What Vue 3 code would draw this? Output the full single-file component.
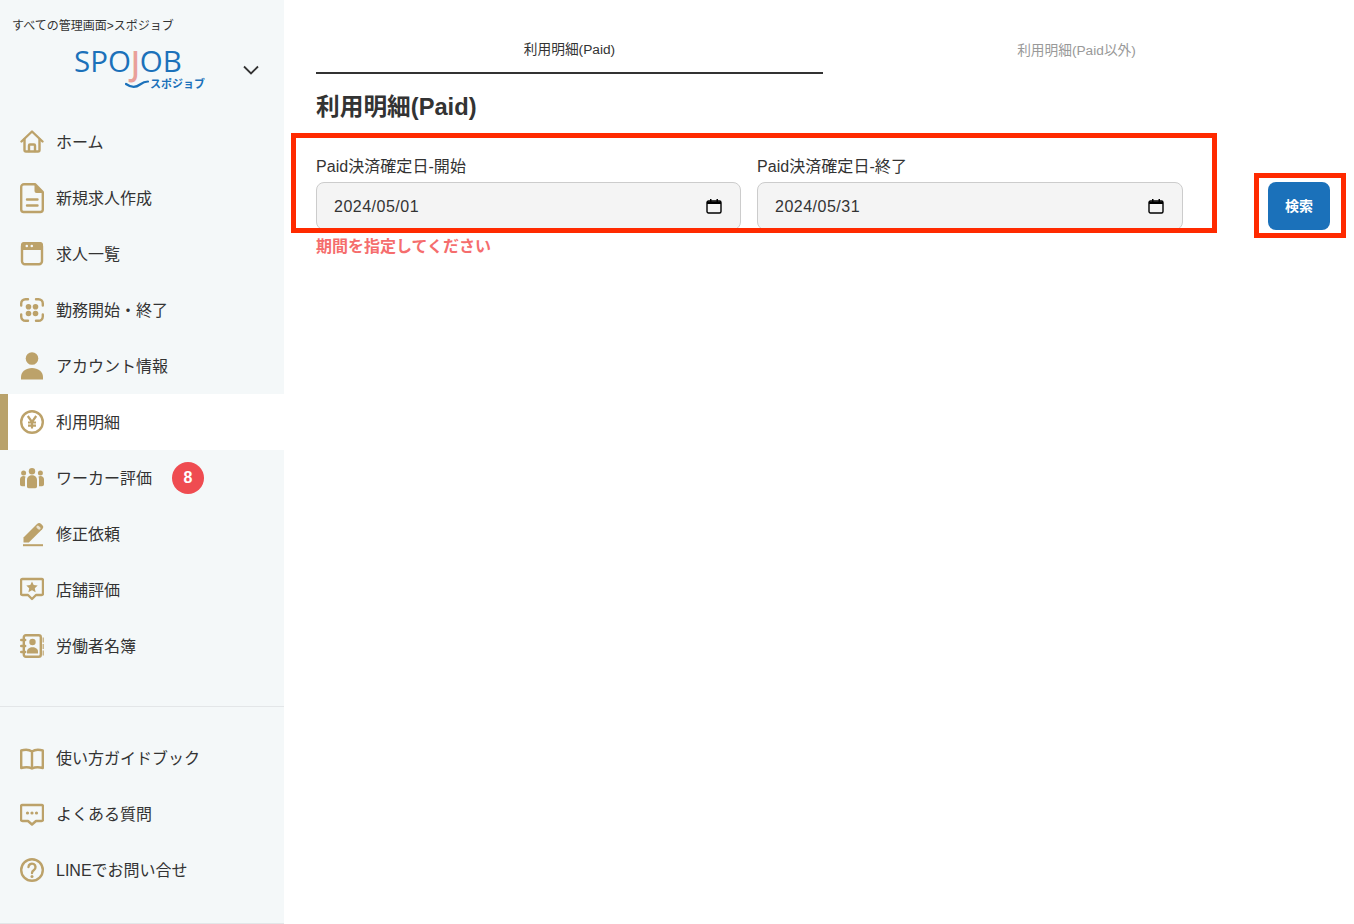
<script setup>
const bg = '#f4f8f9'
const s = 'fill="none" stroke="currentColor" stroke-width="2.400" stroke-linecap="round" stroke-linejoin="round"'
const icons = {
  home: `<g ${s}><path d="M1.500 15.500 12 5.500l10.500 10"/><path d="M4.500 13.500V24A1.500 1.500 0 0 0 6 25.500h12a1.500 1.500 0 0 0 1.500-1.500V13.500"/><path d="M9 25v-5.500a1 1 0 0 1 1-1h4a1 1 0 0 1 1 1V25"/></g>`,
  doc: `<path ${s} d="M4 2.200h11l7.800 8V27.500a2.500 2.500 0 0 1-2.500 2.500H3.700a2.500 2.500 0 0 1-2.500-2.500V5A2.800 2.800 0 0 1 4 2.200Z"/><path fill="currentColor" d="M14.500 2.500 23 11h-6.500a2 2 0 0 1-2-2Z"/><g ${s}><path d="M7 17.500h10.500M7 23.500h10.500"/></g>`,
  win: `<rect ${s} x="2" y="5.200" width="20" height="21" rx="3"/><path fill="currentColor" d="M4 4h16a3 3 0 0 1 3 3v5H1V7a3 3 0 0 1 3-3Z"/><circle cx="6.800" cy="8" r="1.300" fill="${bg}"/><circle cx="11.800" cy="8" r="1.300" fill="${bg}"/>`,
  scan: `<g ${s}><path d="M8 5.200H5.500a4.300 4.300 0 0 0-4.300 4.300v2M16 5.200h2.500a4.300 4.300 0 0 1 4.300 4.300v2M8 26.800H5.500a4.300 4.300 0 0 1-4.300-4.300v-2M16 26.800h2.500a4.300 4.300 0 0 0 4.300-4.300v-2"/></g><g fill="currentColor"><circle cx="8.500" cy="12.700" r="2.800"/><circle cx="15.500" cy="12.700" r="2.800"/><circle cx="8.500" cy="19.500" r="2.800"/><circle cx="15.500" cy="19.500" r="2.800"/></g>`,
  person: `<g fill="currentColor"><circle cx="12" cy="8.500" r="6.300"/><path d="M1 29.500V27c0-5.500 5-9 11-9s11 3.500 11 9v2.500Z"/></g>`,
  yen: `<circle ${s} cx="12" cy="16" r="10.800"/><g fill="none" stroke="currentColor" stroke-width="2.200"><path d="m7.800 10 4.200 6 4.200-6M12 16v6.500M8 16.500h8M8 19.700h8"/></g>`,
  team: `<g fill="currentColor"><circle cx="12" cy="9.200" r="3.200"/><circle cx="3.600" cy="11" r="2.500"/><circle cx="20.400" cy="11" r="2.500"/><path d="M7 18c0-3 2.200-4.800 5-4.800s5 1.800 5 4.800v6.500c0 1-.7 1.700-1.700 1.700H8.700c-1 0-1.700-.7-1.700-1.700Z"/><path d="M0 17.500c0-2 1.500-3.500 3.500-3.500.8 0 1.500.2 2 .6C5.100 15.700 5 17 5 18v6.200H2c-1.200 0-2-.8-2-2Z"/><path d="M24 17.500c0-2-1.500-3.500-3.500-3.500-.8 0-1.500.2-2 .6.400 1.100.5 2.400.5 3.400v6.200h3c1.200 0 2-.8 2-2Z"/></g>`,
  pen: `<path fill="currentColor" d="M3.500 24v-4.500L17 6a3 3 0 0 1 4.200 0l1 1a3 3 0 0 1 0 4.200L8.800 24.500H4a.5.5 0 0 1-.5-.5Z"/><rect x="16.200" y="8.200" width="4.600" height="2.800" rx="1.300" transform="rotate(45 18.500 9.600)" fill="#e9e2d0"/><rect x="3" y="26.200" width="20" height="2" fill="currentColor"/>`,
  starb: `<path ${s} d="M2.500 5h19A1.500 1.500 0 0 1 23 6.500v13a1.500 1.500 0 0 1-1.500 1.500H16l-4 4-4-4H2.500A1.500 1.500 0 0 1 1 19.500v-13A1.500 1.500 0 0 1 2.500 5Z"/><path fill="currentColor" d="m12 7.500 1.700 3.600 4 .5-2.900 2.700.8 3.900-3.600-2-3.600 2 .8-3.900-2.900-2.700 4-.5Z"/>`,
  contact: `<rect ${s} x="3.800" y="5.200" width="17" height="21.600" rx="2"/><g ${s}><path d="M1.200 10h4M1.200 16h4M1.200 22h4"/></g><path fill="currentColor" d="M22.500 7.500H24v5h-1.500ZM22.500 14H24v5h-1.500ZM22.500 20.500H24v5h-1.500Z" opacity=".75"/><g fill="currentColor"><circle cx="12.500" cy="12" r="3.200"/><path d="M7 23.500v-2c0-2.600 2.500-4.200 5.500-4.200s5.500 1.600 5.500 4.200v2Z"/></g>`,
  book: `<path ${s} d="M1.200 8.500c4-1.200 8-1 10.800 1 2.800-2 6.800-2.200 10.800-1V26c-4-1-7.800-1-10.800.5C9 25 5.200 25 1.200 26ZM12 9.500v17"/>`,
  chat: `<path ${s} d="M2.500 7h19A1.500 1.500 0 0 1 23 8.500v13a1.500 1.500 0 0 1-1.500 1.500H16l-4 3.500L8 23H2.500A1.500 1.500 0 0 1 1 21.500v-13A1.500 1.500 0 0 1 2.500 7Z"/><g fill="currentColor"><circle cx="7.500" cy="15" r="1.600"/><circle cx="12" cy="15" r="1.600"/><circle cx="16.500" cy="15" r="1.600"/></g>`,
  help: `<circle ${s} cx="12" cy="16" r="10.800"/><path ${s} d="M8.500 13a3.500 3.500 0 1 1 5.500 3c-1.300.9-2 1.500-2 3"/><circle cx="12" cy="22.500" r="1.500" fill="currentColor"/>`
}
const mainNav = [
  { label: 'ホーム', icon: 'home' },
  { label: '新規求人作成', icon: 'doc' },
  { label: '求人一覧', icon: 'win' },
  { label: '勤務開始・終了', icon: 'scan' },
  { label: 'アカウント情報', icon: 'person' },
  { label: '利用明細', icon: 'yen', active: true },
  { label: 'ワーカー評価', icon: 'team', badge: 8 },
  { label: '修正依頼', icon: 'pen' },
  { label: '店舗評価', icon: 'starb' },
  { label: '労働者名簿', icon: 'contact' }
]
const subNav = [
  { label: '使い方ガイドブック', icon: 'book' },
  { label: 'よくある質問', icon: 'chat' },
  { label: 'LINEでお問い合せ', icon: 'help' }
]
const fields = [
  { label: 'Paid決済確定日-開始', value: '2024/05/01' },
  { label: 'Paid決済確定日-終了', value: '2024/05/31' }
]
</script>

<template>
  <div class="page">
    <aside class="sidebar">
      <div class="crumb">すべての管理画面&gt;スポジョブ</div>
      <div class="brand">
        <div class="logo">
          <div class="logo-word">SPO<span class="logo-j">J</span>OB</div>
          <div class="logo-sub">
            <svg class="swoosh" width="24" height="10" viewBox="0 0 24 10"><path d="M1 5c5 3.500 10 3.500 14 .5 2-1.500 4-3 8-3" fill="none" stroke="#1b71ba" stroke-width="2.200" stroke-linecap="round"/></svg>
            <span>スポジョブ</span>
          </div>
        </div>
        <svg class="chevron" width="18" height="12" viewBox="0 0 18 12"><path d="M2 2.500 9 9.500l7-7" fill="none" stroke="#333" stroke-width="1.800"/></svg>
      </div>
      <nav class="nav">
        <a v-for="item in mainNav" :key="item.label" class="nav-item" :class="{ active: item.active }">
          <svg class="icon" width="24" height="32" viewBox="0 0 24 32" v-html="icons[item.icon]"></svg>
          <span class="nav-label">{{ item.label }}</span>
          <span v-if="item.badge" class="badge">{{ item.badge }}</span>
        </a>
      </nav>
      <nav class="nav nav-sub">
        <a v-for="item in subNav" :key="item.label" class="nav-item">
          <svg class="icon" width="24" height="32" viewBox="0 0 24 32" v-html="icons[item.icon]"></svg>
          <span class="nav-label">{{ item.label }}</span>
        </a>
      </nav>
    </aside>

    <main class="main">
      <div class="tabs">
        <div class="tab current">利用明細(Paid)</div>
        <div class="tab">利用明細(Paid以外)</div>
      </div>
      <h1 class="title">利用明細(Paid)</h1>
      <div class="search">
        <div class="fields">
          <label v-for="f in fields" :key="f.label" class="field">
            <span class="field-label">{{ f.label }}</span>
            <span class="date">
              <span class="date-value">{{ f.value }}</span>
              <svg width="16" height="16" viewBox="0 0 16 16"><path d="M2.500 3h11A1.500 1.500 0 0 1 15 4.500v9a1.500 1.500 0 0 1-1.500 1.500h-11A1.500 1.500 0 0 1 1 13.500v-9A1.500 1.500 0 0 1 2.500 3Z" fill="none" stroke="#000" stroke-width="1.400"/><path d="M1 3.500h14V6H1ZM4 1h1.500v2.500H4ZM10.500 1H12v2.500h-1.500Z" fill="#000"/></svg>
            </span>
          </label>
        </div>
        <button class="btn" type="button"><span class="btn-label">検索</span></button>
      </div>
      <p class="error">期間を指定してください</p>
    </main>

    <div class="mark mark-form"></div>
    <div class="mark mark-btn"></div>
  </div>
</template>

<style>
html, body { margin: 0; padding: 0; background: #fff; }
</style>

<style scoped>
.page {
  position: relative;
  display: flex;
  width: 1354px;
  height: 924px;
  overflow: hidden;
  font-family: "Liberation Sans", "Noto Sans CJK JP", sans-serif;
  color: #333;
}
.sidebar {
  width: 284px;
  height: 924px;
  box-sizing: border-box;
  flex: none;
  background: #f4f8f9;
  border-bottom: 1px solid #e3e6e8;
}
.crumb {
  padding: 19px 0 0 12px;
  font-size: 12px;
  line-height: 14px;
}
.brand {
  display: flex;
  height: 81px;
  box-sizing: border-box;
  padding: 13px 0 0 74px;
}
.logo { width: 131px; }
.logo-word {
  font-family: "Open Sans", sans-serif;
  font-size: 29.500px;
  font-weight: 500;
  line-height: 30px;
  color: #1b71ba;
}
.logo-j {
  display: inline-block;
  color: #e9a09a;
  font-weight: 600;
  transform: scaleY(1.15);
  transform-origin: top;
}
.logo-sub {
  display: flex;
  align-items: center;
  justify-content: flex-end;
  gap: 1px;
  margin-top: 1px;
  font-size: 11px;
  line-height: 14px;
  font-weight: 700;
  color: #1b71ba;
}
.chevron { margin: 18px 0 0 37px; }
.nav-item {
  display: flex;
  align-items: center;
  height: 56px;
  box-sizing: border-box;
  padding-left: 20px;
  font-size: 16px;
  color: #333;
}
.nav-label { margin-bottom: 2px; }
.nav-item.active {
  background: #fff;
  border-left: 8px solid #b9a26b;
  padding-left: 12px;
}
.icon {
  flex: none;
  margin-right: 12px;
  color: #bca26a;
}
.badge {
  display: flex;
  align-items: center;
  justify-content: center;
  width: 32px;
  height: 32px;
  margin-left: 20px;
  border-radius: 50%;
  background: #ef4c51;
  color: #fff;
  font-size: 16px;
  font-weight: 700;
}
.nav-sub {
  margin-top: 32px;
  padding-top: 23px;
  border-top: 1px solid #e3e6e8;
}
.main {
  flex: 1;
  padding: 0 24px 0 32px;
}
.tabs { display: flex; }
.tab {
  flex: 1;
  height: 74px;
  box-sizing: border-box;
  padding-top: 43px;
  text-align: center;
  font-size: 13.700px;
  line-height: 16px;
  color: #999;
}
.tab.current {
  padding-top: 42px;
  color: #333;
  border-bottom: 2px solid #333;
}
.title {
  margin: 16px 0 0;
  font-size: 23.700px;
  line-height: 34px;
  font-weight: 700;
  color: #333;
}
.search {
  display: flex;
  justify-content: space-between;
  align-items: flex-end;
  margin-top: 26px;
}
.fields { display: flex; gap: 16px; }
.field:first-child { width: 425px; }
.field { display: block; width: 426px; }
.field-label {
  display: block;
  height: 32px;
  font-size: 16px;
  line-height: 34px;
  letter-spacing: 0.05px;
}
.date {
  display: flex;
  align-items: center;
  justify-content: space-between;
  height: 48px;
  box-sizing: border-box;
  padding: 0 18px 0 17px;
  border: 1px solid #ccc;
  border-radius: 8px;
  background: #f4f4f4;
}
.date-value {
  padding-top: 2px;
  font-size: 16px;
  letter-spacing: 0.5px;
  color: #333;
}
.btn {
  width: 62px;
  height: 48px;
  padding: 0 0 2px;
  border: 0;
  border-radius: 8px;
  background: #1b71ba;
  color: #fff;
  font-family: inherit;
  font-size: 14px;
  font-weight: 700;
}
.error {
  margin: 7px 0 0;
  font-size: 16px;
  line-height: 20px;
  font-weight: 700;
  color: #f56d6d;
}
.mark {
  position: absolute;
  box-sizing: border-box;
  border: 5px solid #ff2a00;
  pointer-events: none;
}
.mark-form { left: 291px; top: 133px; width: 926px; height: 100px; }
.mark-btn { left: 1254px; top: 173px; width: 92px; height: 65px; }
</style>
